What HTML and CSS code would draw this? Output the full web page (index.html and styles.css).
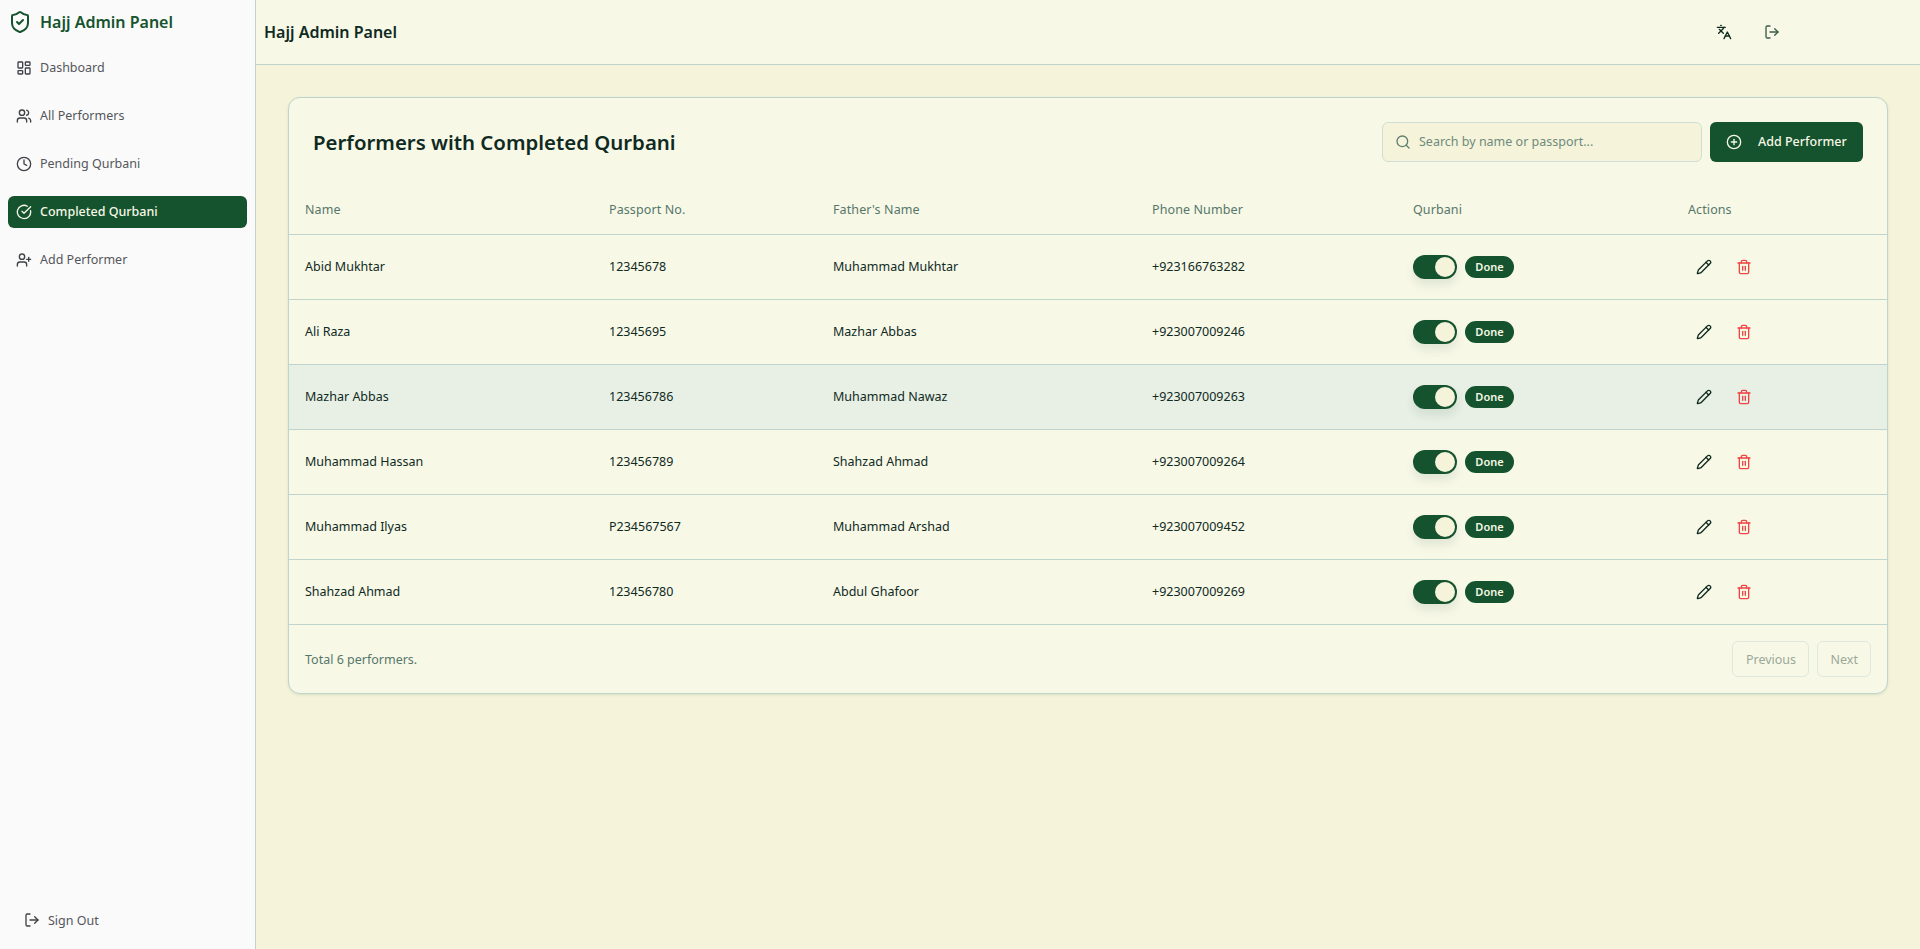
FILE: index.html
```html
<!DOCTYPE html>
<html lang="en">
<head>
<meta charset="utf-8">
<title>Hajj Admin Panel</title>
<link rel="stylesheet" href="styles.css">
</head>
<body>
<svg class="defs" aria-hidden="true">
  <symbol id="i-shield" viewBox="0 0 24 24"><path d="M20 13c0 5-3.5 7.5-7.66 8.95a1 1 0 0 1-.67-.01C7.5 20.5 4 18 4 13V6a1 1 0 0 1 1-1c2 0 4.5-1.2 6.24-2.72a1.17 1.17 0 0 1 1.52 0C14.51 3.81 17 5 19 5a1 1 0 0 1 1 1z"/><path d="m9 12 2 2 4-4"/></symbol>
  <symbol id="i-dash" viewBox="0 0 24 24"><rect x="3" y="3" width="7" height="9" rx="1"/><rect x="14" y="3" width="7" height="5" rx="1"/><rect x="14" y="12" width="7" height="9" rx="1"/><rect x="3" y="16" width="7" height="5" rx="1"/></symbol>
  <symbol id="i-users" viewBox="0 0 24 24"><path d="M16 21v-2a4 4 0 0 0-4-4H6a4 4 0 0 0-4 4v2"/><circle cx="9" cy="7" r="4"/><path d="M22 21v-2a4 4 0 0 0-3-3.87"/><path d="M16 3.13a4 4 0 0 1 0 7.75"/></symbol>
  <symbol id="i-clock" viewBox="0 0 24 24"><circle cx="12" cy="12" r="10"/><polyline points="12 6 12 12 16 14"/></symbol>
  <symbol id="i-check" viewBox="0 0 24 24"><path d="M21.801 10A10 10 0 1 1 17 3.335"/><path d="m9 11 3 3L22 4"/></symbol>
  <symbol id="i-userplus" viewBox="0 0 24 24"><path d="M16 21v-2a4 4 0 0 0-4-4H6a4 4 0 0 0-4 4v2"/><circle cx="9" cy="7" r="4"/><line x1="19" y1="8" x2="19" y2="14"/><line x1="22" y1="11" x2="16" y2="11"/></symbol>
  <symbol id="i-logout" viewBox="0 0 24 24"><path d="M9 21H5a2 2 0 0 1-2-2V5a2 2 0 0 1 2-2h4"/><polyline points="16 17 21 12 16 7"/><line x1="21" y1="12" x2="9" y2="12"/></symbol>
  <symbol id="i-lang" viewBox="0 0 24 24"><path d="m5 8 6 6"/><path d="m4 14 6-6 2-3"/><path d="M2 5h12"/><path d="M7 2h1"/><path d="m22 22-5-10-5 10"/><path d="M14 18h6"/></symbol>
  <symbol id="i-plus" viewBox="0 0 24 24"><circle cx="12" cy="12" r="10"/><path d="M8 12h8"/><path d="M12 8v8"/></symbol>
  <symbol id="i-search" viewBox="0 0 24 24"><circle cx="11" cy="11" r="8"/><path d="m21 21-4.3-4.3"/></symbol>
  <symbol id="i-pencil" viewBox="0 0 24 24"><path d="M21.174 6.812a1 1 0 0 0-3.986-3.987L3.842 16.174a2 2 0 0 0-.5.83l-1.321 4.352a.5.5 0 0 0 .623.622l4.353-1.32a2 2 0 0 0 .83-.497z"/><path d="m15 5 4 4"/></symbol>
  <symbol id="i-trash" viewBox="0 0 24 24"><path d="M3 6h18"/><path d="M19 6v14c0 1-1 2-2 2H7c-1 0-2-1-2-2V6"/><path d="M8 6V4c0-1 1-2 2-2h4c1 0 2 1 2 2v2"/><line x1="10" y1="11" x2="10" y2="17"/><line x1="14" y1="11" x2="14" y2="17"/></symbol>
</svg>
<div class="app">
  <aside class="sidebar">
    <div class="brand">
      <svg class="icon brand-icon"><use href="#i-shield"/></svg>
      <span>Hajj Admin Panel</span>
    </div>
    <nav class="nav">
      <a class="nav-item"><svg class="icon icon-16"><use href="#i-dash"/></svg><span>Dashboard</span></a>
      <a class="nav-item"><svg class="icon icon-16"><use href="#i-users"/></svg><span>All Performers</span></a>
      <a class="nav-item"><svg class="icon icon-16"><use href="#i-clock"/></svg><span>Pending Qurbani</span></a>
      <a class="nav-item active"><svg class="icon icon-16"><use href="#i-check"/></svg><span>Completed Qurbani</span></a>
      <a class="nav-item"><svg class="icon icon-16"><use href="#i-userplus"/></svg><span>Add Performer</span></a>
    </nav>
    <a class="signout"><svg class="icon icon-16"><use href="#i-logout"/></svg><span>Sign Out</span></a>
  </aside>
  <div class="main">
    <header class="topbar">
      <h2 class="topbar-title">Hajj Admin Panel</h2>
      <div class="topbar-actions">
        <svg class="icon icon-16 top-lang"><use href="#i-lang"/></svg>
        <svg class="icon icon-16 top-out"><use href="#i-logout"/></svg>
      </div>
    </header>
    <main class="content">
      <section class="card">
        <div class="card-head">
          <h1 class="card-title">Performers with Completed Qurbani</h1>
          <div class="card-tools">
            <label class="search">
              <svg class="icon icon-16"><use href="#i-search"/></svg>
              <span>Search by name or passport...</span>
            </label>
            <button class="add-btn"><svg class="icon icon-16"><use href="#i-plus"/></svg><span>Add Performer</span></button>
          </div>
        </div>
        <table class="table">
          <colgroup>
            <col class="c1"><col class="c2"><col class="c3"><col class="c4"><col class="c5"><col class="c6">
          </colgroup>
          <thead>
            <tr><th>Name</th><th>Passport No.</th><th>Father's Name</th><th>Phone Number</th><th>Qurbani</th><th>Actions</th></tr>
          </thead>
          <tbody>
            <tr><td>Abid Mukhtar</td><td>12345678</td><td>Muhammad Mukhtar</td><td>+923166763282</td><td><div class="qb"><span class="toggle"><i></i></span><span class="badge">Done</span></div></td><td><div class="acts"><svg class="icon icon-16 pen"><use href="#i-pencil"/></svg><svg class="icon icon-16 trash"><use href="#i-trash"/></svg></div></td></tr>
            <tr><td>Ali Raza</td><td>12345695</td><td>Mazhar Abbas</td><td>+923007009246</td><td><div class="qb"><span class="toggle"><i></i></span><span class="badge">Done</span></div></td><td><div class="acts"><svg class="icon icon-16 pen"><use href="#i-pencil"/></svg><svg class="icon icon-16 trash"><use href="#i-trash"/></svg></div></td></tr>
            <tr class="hover"><td>Mazhar Abbas</td><td>123456786</td><td>Muhammad Nawaz</td><td>+923007009263</td><td><div class="qb"><span class="toggle"><i></i></span><span class="badge">Done</span></div></td><td><div class="acts"><svg class="icon icon-16 pen"><use href="#i-pencil"/></svg><svg class="icon icon-16 trash"><use href="#i-trash"/></svg></div></td></tr>
            <tr><td>Muhammad Hassan</td><td>123456789</td><td>Shahzad Ahmad</td><td>+923007009264</td><td><div class="qb"><span class="toggle"><i></i></span><span class="badge">Done</span></div></td><td><div class="acts"><svg class="icon icon-16 pen"><use href="#i-pencil"/></svg><svg class="icon icon-16 trash"><use href="#i-trash"/></svg></div></td></tr>
            <tr><td>Muhammad Ilyas</td><td>P234567567</td><td>Muhammad Arshad</td><td>+923007009452</td><td><div class="qb"><span class="toggle"><i></i></span><span class="badge">Done</span></div></td><td><div class="acts"><svg class="icon icon-16 pen"><use href="#i-pencil"/></svg><svg class="icon icon-16 trash"><use href="#i-trash"/></svg></div></td></tr>
            <tr><td>Shahzad Ahmad</td><td>123456780</td><td>Abdul Ghafoor</td><td>+923007009269</td><td><div class="qb"><span class="toggle"><i></i></span><span class="badge">Done</span></div></td><td><div class="acts"><svg class="icon icon-16 pen"><use href="#i-pencil"/></svg><svg class="icon icon-16 trash"><use href="#i-trash"/></svg></div></td></tr>
          </tbody>
        </table>
        <div class="card-foot">
          <span class="total">Total 6 performers.</span>
          <div class="pager">
            <button class="page-btn">Previous</button>
            <button class="page-btn">Next</button>
          </div>
        </div>
      </section>
    </main>
  </div>
</div>
</body>
</html>
```
FILE: styles.css
```css
* { box-sizing: border-box; }
html, body { margin: 0; height: 100%; }
body {
  font-family: "Noto Sans", sans-serif;
  background: #f5f4da;
  color: #0f2a1f;
  overflow: hidden;
}
.defs { position: absolute; width: 0; height: 0; }
.icon {
  fill: none;
  stroke: currentColor;
  stroke-width: 2;
  stroke-linecap: round;
  stroke-linejoin: round;
  flex: none;
}
.icon-16 { width: 16px; height: 16px; }

.app { display: flex; height: 949px; }

.sidebar {
  width: 256px;
  flex: none;
  background: #fafafa;
  border-right: 1px solid #c3d3cb;
  display: flex;
  flex-direction: column;
  padding: 8px;
}
.brand {
  display: flex;
  align-items: center;
  gap: 8px;
  height: 28px;
  margin-bottom: 16px;
  font-size: 16px;
  font-weight: 600;
  color: #14532d;
}
.brand-icon { width: 24px; height: 24px; }
.nav { display: flex; flex-direction: column; gap: 16px; }
.nav-item {
  display: flex;
  align-items: center;
  gap: 8px;
  height: 32px;
  padding: 0 8px 1px;
  border-radius: 6px;
  font-size: 12.5px;
  color: #54565c;
}
.nav-item .icon { color: #3f4146; }
.nav-item.active { background: #14532d; color: #f8f8e7; font-weight: 500; }
.nav-item.active .icon { color: #f8f8e7; }
.signout {
  margin-top: auto;
  margin-bottom: 3px;
  display: flex;
  align-items: center;
  gap: 8px;
  height: 36px;
  padding-left: 16px;
  font-size: 12.5px;
  color: #54565c;
}
.signout .icon { color: #3f4146; }

.main { flex: 1; min-width: 0; display: flex; flex-direction: column; }
.topbar {
  height: 65px;
  flex: none;
  background: #f8f8e7;
  border-bottom: 1px solid #bdd3cb;
  display: flex;
  align-items: center;
  justify-content: space-between;
  padding: 0 8px;
}
.topbar-title { margin: 0; font-size: 16px; font-weight: 600; color: #0f2a1f; }
.topbar-actions { display: flex; align-items: center; gap: 32px; padding-right: 132px; }
.top-lang { color: #0f2a1f; }
.top-out { color: #3d5a4c; }

.content { padding: 32px; }
.card {
  background: #f8f8e7;
  border: 1px solid #bfd4cc;
  border-radius: 12px;
  box-shadow: 0 1px 3px rgba(20, 83, 45, 0.12);
  height: 597px;
}
.card-head {
  height: 87px;
  display: flex;
  align-items: center;
  justify-content: space-between;
  padding: 0 24px;
}
.card-title { margin: 0; font-size: 20.4px; font-weight: 600; color: #0f2a1f; }
.card-tools { display: flex; gap: 8px; }
.search {
  width: 320px;
  height: 40px;
  display: flex;
  align-items: center;
  gap: 8px;
  padding: 0 12px;
  background: #f5f4da;
  border: 1px solid #cfded6;
  border-radius: 6px;
  font-size: 12.5px;
  color: #6f8a7d;
}
.search .icon { color: #5d7f70; }
.add-btn {
  width: 153px;
  height: 40px;
  display: flex;
  align-items: center;
  gap: 16px;
  padding: 0 16px;
  background: #14532d;
  color: #f8f8e7;
  border: 0;
  border-radius: 6px;
  white-space: nowrap;
  font: 500 12.5px "Noto Sans", sans-serif;
}
.table { width: 100%; border-collapse: collapse; table-layout: fixed; }
.c1 { width: 304px; }
.c2 { width: 224px; }
.c3 { width: 319px; }
.c4 { width: 261px; }
.c5 { width: 275px; }
.table th {
  height: 49px;
  padding: 0 16px;
  text-align: left;
  font-size: 12.5px;
  font-weight: 400;
  letter-spacing: 0.1px;
  color: #55776a;
  border-bottom: 1px solid #bfd4cc;
}
.table td {
  height: 65px;
  padding: 0 16px;
  font-size: 12.5px;
  color: #0f2a1f;
  border-bottom: 1px solid #bfd4cc;
}
.table .hover td { background: #e8efe4; }
.qb { display: flex; align-items: center; gap: 8px; }
.toggle {
  width: 44px;
  height: 24px;
  flex: none;
  border-radius: 12px;
  background: #14532d;
  display: flex;
  justify-content: flex-end;
  align-items: center;
  padding: 0 2px;
  box-shadow: 0 6px 10px rgba(20, 83, 45, 0.1);
}
.toggle i { width: 20px; height: 20px; border-radius: 50%; background: #f5f4da; }
.badge {
  width: 49px;
  height: 22px;
  display: flex;
  align-items: center;
  justify-content: center;
  border-radius: 11px;
  background: #14532d;
  color: #f8f8e7;
  font-size: 11px;
  font-weight: 600;
}
.acts { display: flex; align-items: center; gap: 24px; padding-left: 8px; }
.pen { color: #0f2a1f; }
.trash { color: #ef4444; }
.card-foot {
  height: 69px;
  display: flex;
  align-items: center;
  justify-content: space-between;
  padding: 0 16px;
}
.total { font-size: 12.5px; color: #55776a; }
.pager { display: flex; gap: 8px; }
.page-btn {
  height: 36px;
  padding: 0 12px 0 12.5px;
  background: transparent;
  border: 1px solid #dfe8dc;
  border-radius: 6px;
  font: 400 12.5px "Noto Sans", sans-serif;
  color: #9aa998;
}
```
